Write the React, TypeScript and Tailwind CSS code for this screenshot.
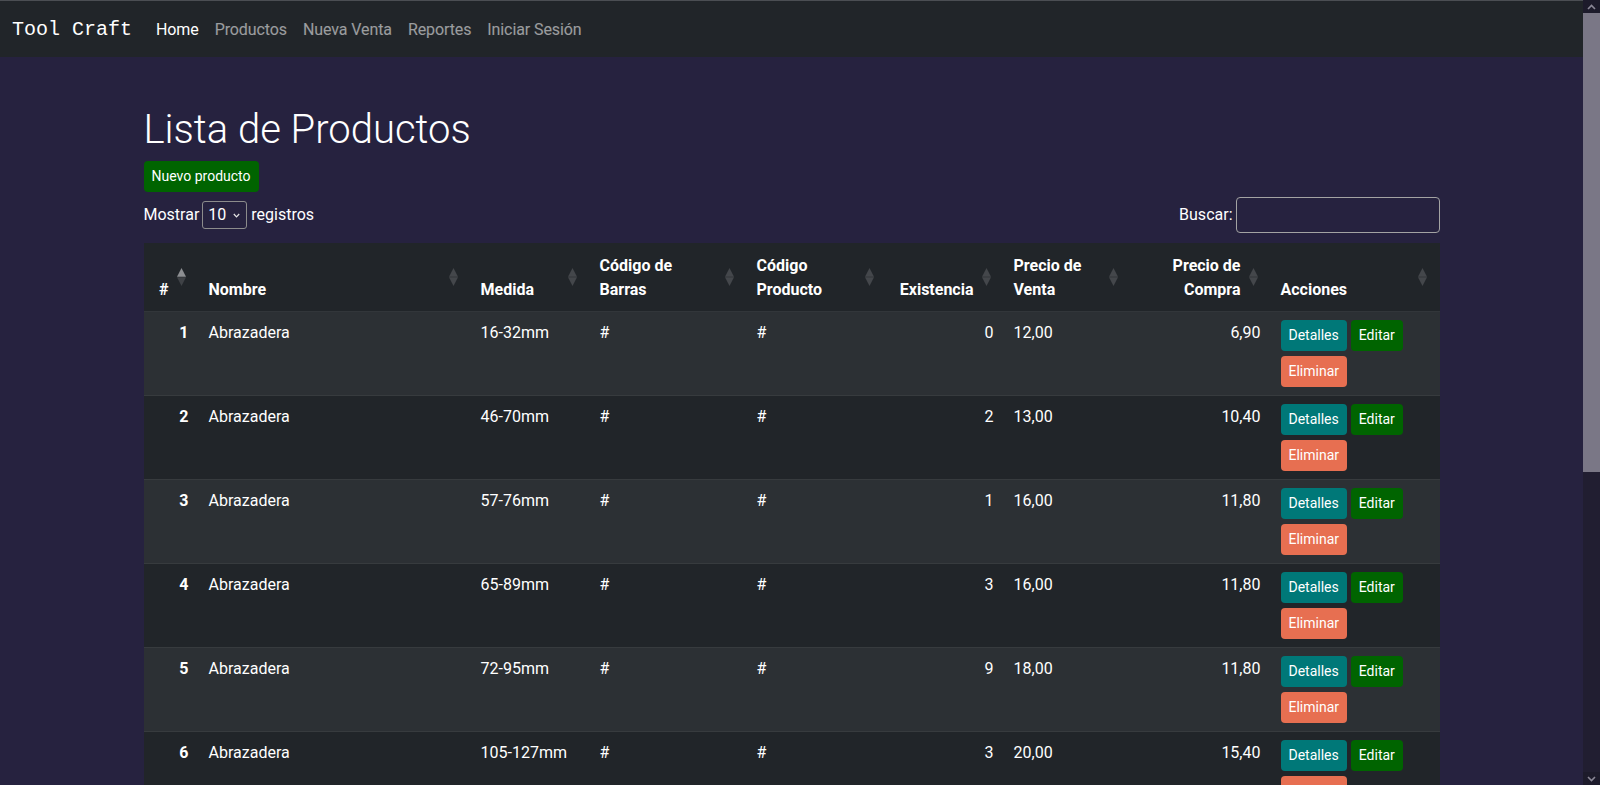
import React from "react";

type Row = {
  id: number;
  nombre: string;
  medida: string;
  barras: string;
  codigo: string;
  existencia: number;
  venta: string;
  compra: string;
};

const rows: Row[] = [
  { id: 1, nombre: "Abrazadera", medida: "16-32mm", barras: "#", codigo: "#", existencia: 0, venta: "12,00", compra: "6,90" },
  { id: 2, nombre: "Abrazadera", medida: "46-70mm", barras: "#", codigo: "#", existencia: 2, venta: "13,00", compra: "10,40" },
  { id: 3, nombre: "Abrazadera", medida: "57-76mm", barras: "#", codigo: "#", existencia: 1, venta: "16,00", compra: "11,80" },
  { id: 4, nombre: "Abrazadera", medida: "65-89mm", barras: "#", codigo: "#", existencia: 3, venta: "16,00", compra: "11,80" },
  { id: 5, nombre: "Abrazadera", medida: "72-95mm", barras: "#", codigo: "#", existencia: 9, venta: "18,00", compra: "11,80" },
  { id: 6, nombre: "Abrazadera", medida: "105-127mm", barras: "#", codigo: "#", existencia: 3, venta: "20,00", compra: "15,40" },
  { id: 7, nombre: "Abrazadera", medida: "130-165mm", barras: "#", codigo: "#", existencia: 2, venta: "22,00", compra: "16,50" },
  { id: 8, nombre: "Abrazadera", medida: "150-180mm", barras: "#", codigo: "#", existencia: 4, venta: "24,00", compra: "17,20" },
  { id: 9, nombre: "Abrazadera", medida: "170-200mm", barras: "#", codigo: "#", existencia: 1, venta: "26,00", compra: "18,90" },
  { id: 10, nombre: "Abrazadera", medida: "190-220mm", barras: "#", codigo: "#", existencia: 5, venta: "28,00", compra: "20,10" },
];

function SortIcon({ active = false }: { active?: boolean }) {
  return (
    <svg
      width="9"
      height="18"
      viewBox="0 0 9 18"
      className="absolute right-[13px] top-1/2 -translate-y-1/2"
    >
      <polygon points="4.5,0 9,8.8 0,8.8" fill={active ? "#8d8f92" : "#44474b"} />
      <polygon points="0,9.2 9,9.2 4.5,18" fill={active ? "#3f4246" : "#44474b"} />
    </svg>
  );
}

function Th({
  children,
  right = false,
  active = false,
}: {
  children: React.ReactNode;
  right?: boolean;
  active?: boolean;
}) {
  return (
    <th
      className={`relative align-bottom font-bold leading-[24px] pt-[11px] pb-[9px] pl-[10px] pr-[30px] ${
        right ? "text-right" : "text-left"
      }`}
    >
      {children}
      <SortIcon active={active} />
    </th>
  );
}

function Btn({ children, color }: { children: React.ReactNode; color: string }) {
  return (
    <button
      className={`inline-flex h-[31px] items-center rounded-[4px] px-[8px] text-[14px] leading-[21px] text-white ${color}`}
    >
      {children}
    </button>
  );
}

function Chevron({ up = false }: { up?: boolean }) {
  return (
    <svg width="9" height="6" viewBox="0 0 9 6">
      <path
        d={up ? "M1 5 L4.5 1.5 L8 5" : "M1 1 L4.5 4.5 L8 1"}
        fill="none"
        stroke="#8a8796"
        strokeWidth="1.6"
      />
    </svg>
  );
}

const td = "px-[10px] pt-[9px] pb-[7px] align-top leading-[24px]";

export default function App() {
  return (
    <div className="flex h-[785px] w-full overflow-hidden bg-[#26223f] font-['Roboto',sans-serif] text-[16px] text-white">
      <div className="min-w-0 flex-1 overflow-hidden">
        <nav className="flex h-[57px] items-center border-t border-[#4b4e53] bg-[#212529] px-[12px] pt-[2px]">
          <span className="mr-[16px] font-['Liberation_Mono',monospace] text-[20px] leading-[30px] text-white">
            Tool Craft
          </span>
          <a className="px-[8px] leading-[24px] tracking-[-0.1px] text-white">Home</a>
          <a className="px-[8px] leading-[24px] tracking-[-0.1px] text-white/55">Productos</a>
          <a className="px-[8px] leading-[24px] tracking-[-0.1px] text-white/55">Nueva Venta</a>
          <a className="px-[8px] leading-[24px] tracking-[-0.1px] text-white/55">Reportes</a>
          <a className="px-[8px] leading-[24px] tracking-[-0.1px] text-white/55">Iniciar Sesión</a>
        </nav>

        <main className="mx-auto w-[1296px] pt-[48px] pb-[600px]">
          <h1 className="mb-[8px] pt-[1px] text-[40px] font-light leading-[47px]">Lista de Productos</h1>
          <button className="inline-flex h-[31px] items-center rounded-[4px] bg-[#006400] px-[8px] text-[14px] leading-[21px] text-white">
            Nuevo producto
          </button>

          <div className="mt-[5px] flex h-[36px] items-center justify-between">
            <div className="flex items-center leading-[24px]">
              <span>Mostrar</span>
              <div className="ml-[3px] mr-[4px] flex h-[28px] w-[45px] items-center justify-between rounded-[3px] border border-[#8c8c8c] pl-[5px] pr-[6px]">
                <span>10</span>
                <svg width="7" height="5" viewBox="0 0 7 5">
                  <path d="M0.8 1 L3.5 3.8 L6.2 1" fill="none" stroke="#e5e5e5" strokeWidth="1.2" />
                </svg>
              </div>
              <span>registros</span>
            </div>
            <div className="flex items-center leading-[24px]">
              <span>Buscar:</span>
              <input
                className="ml-[3px] h-[36px] w-[204px] rounded-[4px] border border-[#a3a3a3] bg-transparent px-[5px] text-white outline-none"
                type="text"
              />
            </div>
          </div>

          <table className="mt-[10px] w-full table-fixed border-collapse">
            <colgroup>
              <col className="w-[55px]" />
              <col className="w-[272px]" />
              <col className="w-[119px]" />
              <col className="w-[157px]" />
              <col className="w-[140px]" />
              <col className="w-[117px]" />
              <col className="w-[127px]" />
              <col className="w-[140px]" />
              <col className="w-[169px]" />
            </colgroup>
            <thead>
              <tr className="border-b border-[#32363a] bg-[#212529]">
                <Th right active>#</Th>
                <Th>Nombre</Th>
                <Th>Medida</Th>
                <Th>Código de Barras</Th>
                <Th>Código Producto</Th>
                <Th right>
                  <span className="whitespace-nowrap">Existencia</span>
                </Th>
                <Th>Precio de Venta</Th>
                <Th right>Precio de Compra</Th>
                <Th>Acciones</Th>
              </tr>
            </thead>
            <tbody>
              {rows.map((r, i) => (
                <tr
                  key={r.id}
                  className={`border-b border-[#373b3e] ${i % 2 === 0 ? "bg-[#2c3034]" : "bg-[#212529]"}`}
                >
                  <td className={`${td} text-right font-bold`}>{r.id}</td>
                  <td className={td}>{r.nombre}</td>
                  <td className={td}>{r.medida}</td>
                  <td className={td}>{r.barras}</td>
                  <td className={td}>{r.codigo}</td>
                  <td className={`${td} text-right`}>{r.existencia}</td>
                  <td className={td}>{r.venta}</td>
                  <td className={`${td} text-right`}>{r.compra}</td>
                  <td className="px-[10px] py-[8px] align-top">
                    <div className="flex flex-wrap gap-x-[4px] gap-y-[5px]">
                      <Btn color="bg-[#007878]">Detalles</Btn>
                      <Btn color="bg-[#006400]">Editar</Btn>
                      <Btn color="bg-[#e76f51]">Eliminar</Btn>
                    </div>
                  </td>
                </tr>
              ))}
            </tbody>
          </table>

          <div className="mt-[10px] flex items-center justify-between leading-[24px]">
            <span>Mostrando registros del 1 al 10 de un total de 48 registros</span>
            <span className="text-white/70">Anterior 1 2 3 4 5 Siguiente</span>
          </div>
        </main>
      </div>

      <aside className="flex h-[785px] w-[17px] shrink-0 flex-col bg-[#211e31]">
        <div className="flex h-[13px] items-center justify-center bg-[#1d1b2b]">
          <Chevron up />
        </div>
        <div className="h-[459px] bg-[#7a7786]" />
        <div className="flex-1" />
        <div className="flex h-[13px] items-center justify-center bg-[#1d1b2b]">
          <Chevron />
        </div>
      </aside>
    </div>
  );
}
